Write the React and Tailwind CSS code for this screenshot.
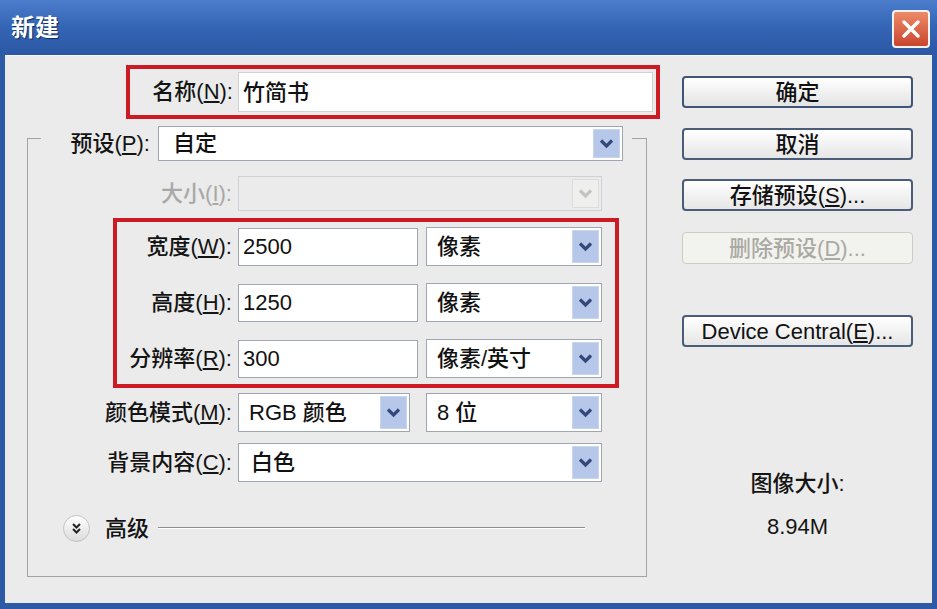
import React from 'react';

const font = "font-['Liberation_Sans','Noto_Sans_CJK_SC',sans-serif]";

function Chevron({ color = '#34497a' }) {
  return (
    <svg width="15" height="11" viewBox="0 0 15 11">
      <path d="M2 2.5 L7.5 8 L13 2.5" fill="none" stroke={color} strokeWidth="3.2" />
    </svg>
  );
}

function Select({ w, h, value, disabled, pl = 'pl-[10px]' }) {
  return (
    <div
      className={`flex items-stretch shrink-0 border ${
        disabled ? 'bg-[#ebebeb] border-[#cfd1d4]' : 'bg-white border-[#9ea6b2]'
      }`}
      style={{ width: w, height: h }}
    >
      <div className={`flex-1 flex items-center ${pl} text-[22px] font-medium text-[#111]`}>{value}</div>
      <div
        className={`w-[27px] my-[2px] mr-[2px] flex items-center justify-center ${
          disabled ? 'bg-[#efefed] border border-[#dcdcda]' : 'bg-[#b6c7ea] border border-[#c8d5ef]'
        }`}
      >
        <Chevron color={disabled ? '#c4c4c4' : '#34497a'} />
      </div>
    </div>
  );
}

function Input({ w, h, value }) {
  return (
    <div
      className="flex items-center shrink-0 bg-white border border-[#9ea6b2] pl-[4px] text-[22px] text-[#111]"
      style={{ width: w, height: h }}
    >
      {value}
    </div>
  );
}

function Label({ w, children, disabled }) {
  return (
    <div
      className={`shrink-0 text-right text-[22px] leading-none font-medium ${disabled ? 'text-[#a8a8a8]' : 'text-[#141414]'}`}
      style={{ width: w }}
    >
      {children}
    </div>
  );
}

const K = ({ children }) => <span className="underline underline-offset-2">{children}</span>;

function Button({ children, primary, disabled }) {
  return (
    <div
      className={`h-[32px] rounded-[4px] flex items-center justify-center text-[22px] font-medium ${
        disabled
          ? 'border border-[#cdccc4] bg-[#f2f2ef] text-[#aaa9a2]'
          : primary
          ? 'border-2 border-[#3f5578] bg-linear-to-b from-white to-[#e3e3e3] text-[#111]'
          : 'border-2 border-[#4b5c78] bg-linear-to-b from-white to-[#e6e6e6] text-[#111]'
      }`}
    >
      {children}
    </div>
  );
}

export default function App() {
  return (
    <div className={`w-[937px] h-[609px] flex flex-col bg-[#2d5aa5] ${font}`}>
      {/* title bar */}
      <div className="h-[55px] shrink-0 flex items-center justify-between pl-[11px] pr-[7px] bg-linear-to-b from-[#4c7dcd] via-[#3464b4] to-[#2b58a4]">
        <span className="text-white font-bold text-[24px] [text-shadow:1px_1px_1px_#0c2a63]">新建</span>
        <div className="w-[38px] h-[38px] mt-[3px] rounded-[4px] border-2 border-[#f4f4f4] bg-linear-to-b from-[#ec8a68] to-[#c9442c] flex items-center justify-center">
          <svg width="22" height="22" viewBox="0 0 22 22">
            <path d="M4 4 L18 18 M18 4 L4 18" stroke="white" strokeWidth="3.5" strokeLinecap="round" />
          </svg>
        </div>
      </div>

      <div className="flex-1 flex px-[5px] pb-[6px]">
        <div className="flex-1 flex bg-[#ebebeb] pl-[22px] border-t border-[#f6f6f6]">
          {/* left column */}
          <div className="w-[633px] shrink-0 flex flex-col">
            <div className="ml-[99px] mt-[9px] w-[534px] h-[54px] border-4 border-[#cc1b24] flex items-center py-[3px] pr-[3px]">
              <Label w={103}>
                名称(<K>N</K>):
              </Label>
              <div className="ml-[5px] flex-1 self-stretch flex items-center bg-white border border-[#cfd3d8] pl-[4px] text-[22px] font-medium text-[#111]">
                竹简书
              </div>
            </div>

            <fieldset className="-mt-[4px] w-[620px] border border-[#a3a3a3] pb-[32px]">
              <legend className="ml-[13px] pt-[11px]">
                <div className="flex items-center pr-[9px]">
                  <Label w={109}>
                    预设(<K>P</K>):
                  </Label>
                  <div className="ml-[8px]">
                    <Select w={465} h={35} value="自定" pl="pl-[14px]" />
                  </div>
                </div>
              </legend>

              <div className="mt-[15px] flex items-center">
                <Label w={204} disabled>
                  大小(<K>I</K>):
                </Label>
                <div className="ml-[6px]">
                  <Select w={364} h={35} value="" disabled />
                </div>
              </div>

              <div className="ml-[85px] mt-[7px] w-[506px] border-4 border-[#cc1b24] pt-[5px] pb-[6px] flex flex-col gap-[17px]">
                {[
                  ['宽度', 'W', '2500', '像素'],
                  ['高度', 'H', '1250', '像素'],
                  ['分辨率', 'R', '300', '像素/英寸'],
                ].map(([l, k, v, u]) => (
                  <div key={k} className="flex items-center">
                    <Label w={115}>
                      {l}(<K>{k}</K>):
                    </Label>
                    <div className="ml-[6px]">
                      <Input w={180} h={38} value={v} />
                    </div>
                    <div className="ml-[8px]">
                      <Select w={176} h={39} value={u} />
                    </div>
                  </div>
                ))}
              </div>

              <div className="mt-[5px] flex items-center">
                <Label w={204}>
                  颜色模式(<K>M</K>):
                </Label>
                <div className="ml-[6px]">
                  <Select w={172} h={39} value="RGB 颜色" />
                </div>
                <div className="ml-[16px]">
                  <Select w={176} h={39} value="8 位" />
                </div>
              </div>

              <div className="mt-[11px] flex items-center">
                <Label w={204}>
                  背景内容(<K>C</K>):
                </Label>
                <div className="ml-[6px]">
                  <Select w={364} h={39} value="白色" pl="pl-[12px]" />
                </div>
              </div>

              <div className="mt-[30px] h-[32px] flex items-center">
                <div className="ml-[35px] w-[27px] h-[27px] rounded-full border border-[#c2c2c2] bg-linear-to-b from-white to-[#dcdcdc] flex items-center justify-center">
                  <svg width="13" height="13" viewBox="0 0 13 13">
                    <path d="M3 2 L6.5 5.5 L10 2 M3 7 L6.5 10.5 L10 7" fill="none" stroke="#222" strokeWidth="2" />
                  </svg>
                </div>
                <span className="ml-[15px] text-[22px] font-medium text-[#141414]">高级</span>
                <div className="ml-[9px] w-[427px] h-[2px] border-t border-[#8e8e8e] border-b border-b-white" />
              </div>
            </fieldset>
          </div>

          {/* right column */}
          <div className="ml-[22px] w-[231px] shrink-0 flex flex-col">
            <div className="mt-[20px]">
              <Button primary>确定</Button>
            </div>
            <div className="mt-[20px]">
              <Button>取消</Button>
            </div>
            <div className="mt-[19px]">
              <Button>
                存储预设(<K>S</K>)...
              </Button>
            </div>
            <div className="mt-[21px]">
              <Button disabled>
                删除预设(<K>D</K>)...
              </Button>
            </div>
            <div className="mt-[51px]">
              <Button>
                Device Central(<K>E</K>)...
              </Button>
            </div>
            <div className="mt-[122px] text-center text-[22px] font-medium leading-[30px] text-[#141414]">图像大小:</div>
            <div className="mt-[13px] text-center text-[22px] leading-[30px] text-[#141414]">8.94M</div>
          </div>
        </div>
      </div>
    </div>
  );
}
